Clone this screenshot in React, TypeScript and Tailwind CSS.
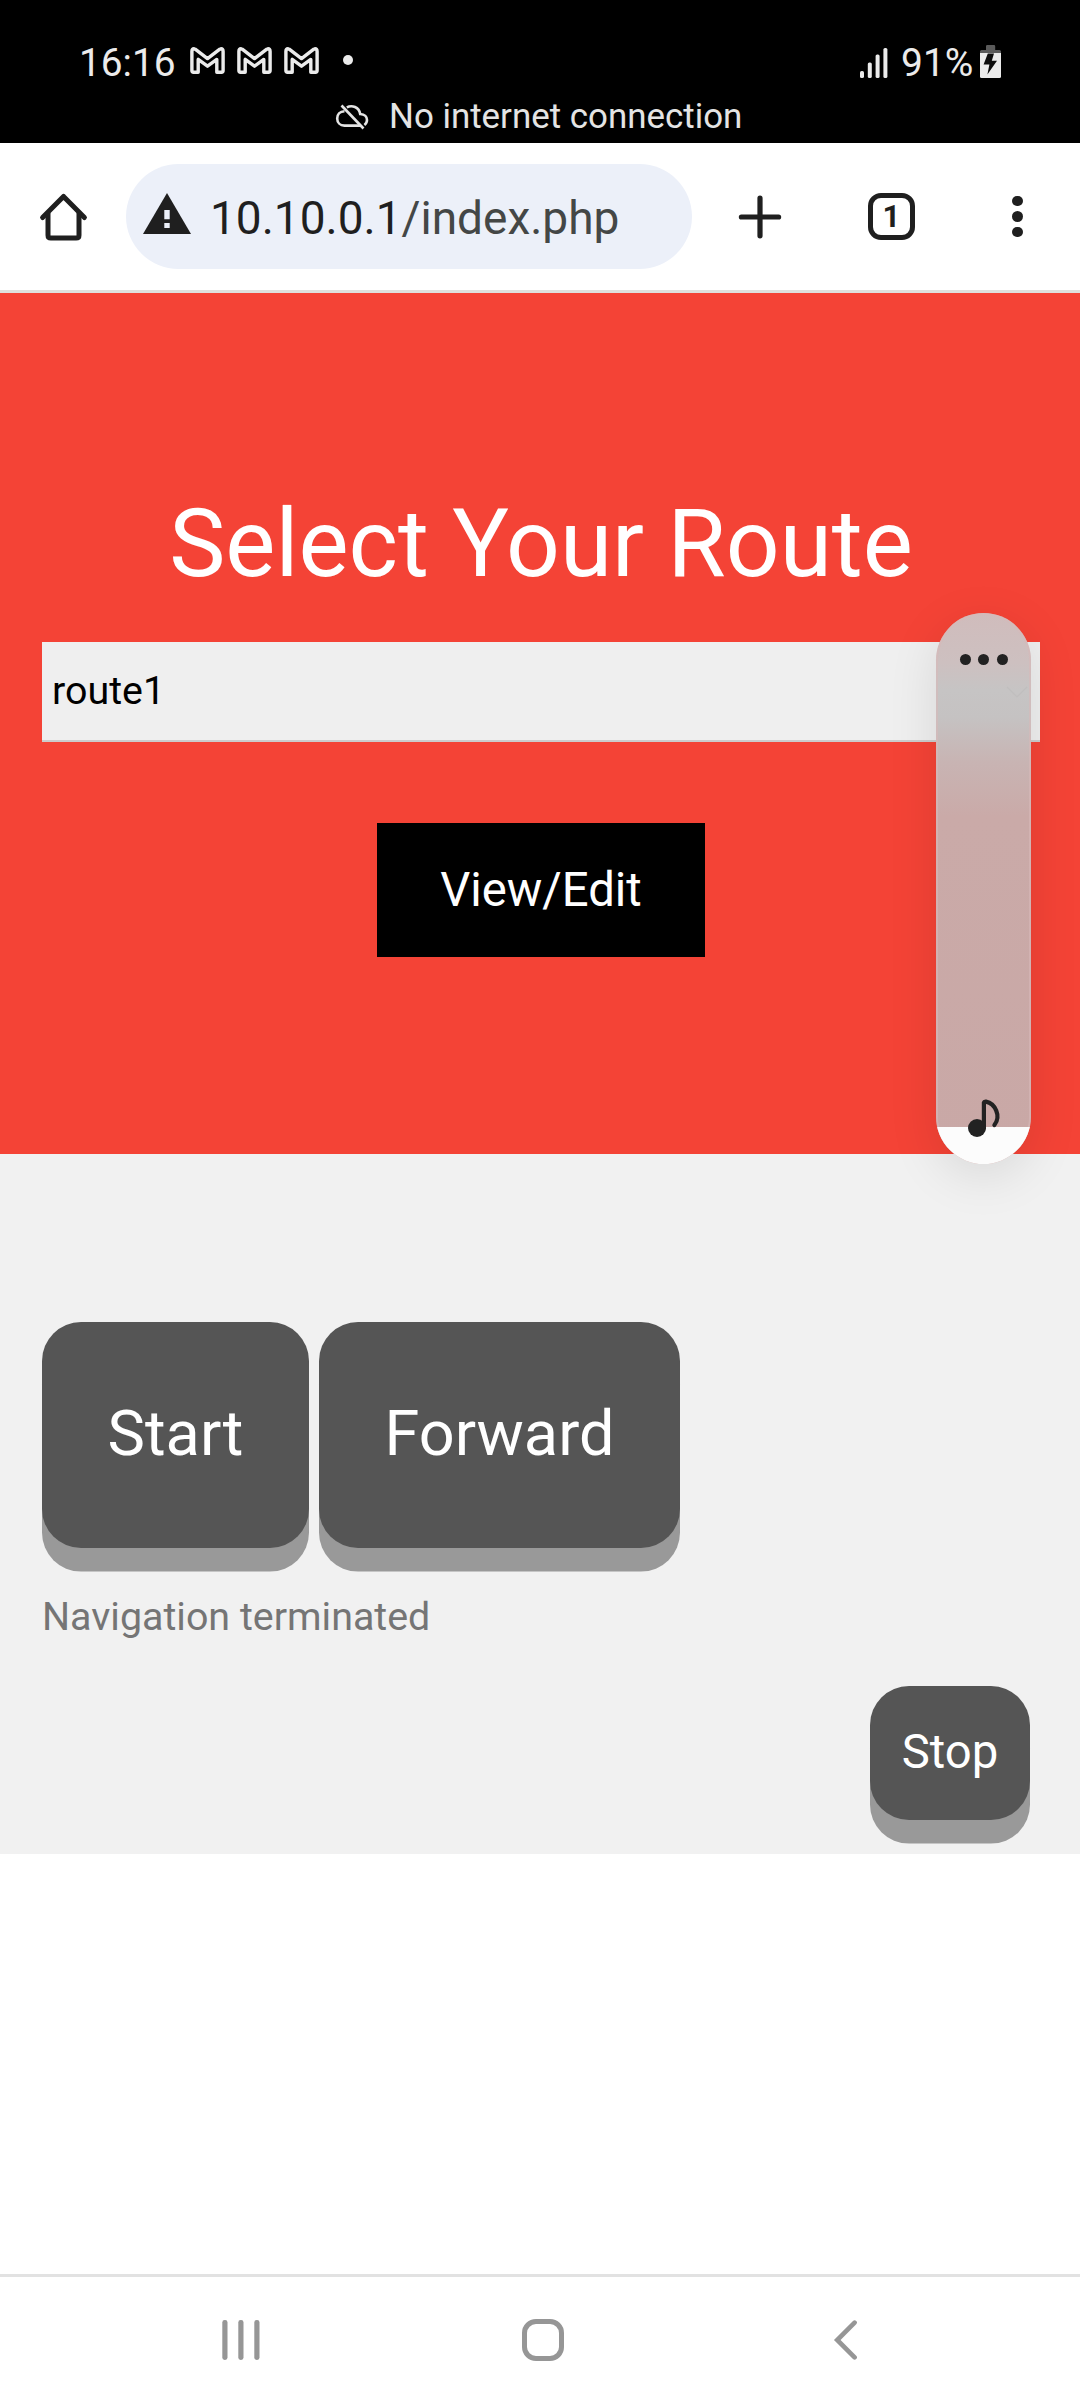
const MailIcon = () => (
  <svg className="h-[27px] w-[35px]" viewBox="0 0 35 27" fill="none" stroke="#ebebeb" strokeWidth="3.4" strokeLinejoin="round">
    <path d="M1.9 4.5Q1.9 1.7 4 1.7L5.2 2.2L17.5 11.6L29.8 2.2L31 1.7Q33.1 1.7 33.1 4.5V23.5Q33.1 25.2 31.4 25.2H26.8V12.4L17.5 19.2L8.2 12.4V25.2H3.6Q1.9 25.2 1.9 23.5Z" />
  </svg>
);

const CloudOffIcon = () => (
  <svg className="h-[26px] w-[34px]" viewBox="0 0 34 26" fill="none" stroke="#e4e4e4" strokeWidth="2.6">
    <path d="M6.5 1.5L28.5 24.5" />
    <path d="M9.5 7.2C4.8 7.4 2.2 10.6 2.2 14.4C2.2 18.8 5.4 21.6 9.4 21.6H25.6" />
    <path d="M11.8 3.4C17 0.6 24 3 25.2 10C29.8 10.2 32 13 32 16C32 18 31 19.8 29.4 21" />
  </svg>
);

const SignalIcon = () => (
  <svg className="h-[30px] w-[28px]" viewBox="0 0 28 30" fill="#ebebeb">
    <rect x="0" y="23" width="4" height="7" rx="1.6" />
    <rect x="7.8" y="14.5" width="4" height="15.5" rx="1.6" />
    <rect x="15.6" y="6.5" width="4" height="23.5" rx="1.6" />
    <rect x="23.4" y="0" width="4" height="30" rx="1.6" />
  </svg>
);

const BatteryIcon = () => (
  <svg className="h-[33px] w-[21px]" viewBox="0 0 21 33">
    <path d="M6 1.2Q6 0 7.2 0H14Q15.2 0 15.2 1.2V5H19.5Q21 5 21 6.5V8H0V6.5Q0 5 1.5 5H6Z" fill="#5a5a5a" />
    <path d="M0 8H21V31.5Q21 33 19.5 33H1.5Q0 33 0 31.5Z" fill="#ebebeb" />
    <path d="M7.8 8.4H14L11.8 15.8H17L7.4 29.6L9.4 19.6H3.6Z" fill="#0c0c0c" />
  </svg>
);

function StatusBar() {
  return (
    <header className="h-[143px] bg-black pt-[36px] text-[#ebebeb]">
      <div className="flex h-[54px] items-center pl-[79px] pr-[79px]">
        <span className="w-[111px] text-[38.8px] leading-[54px]">16:16</span>
        <div className="flex gap-[12px] pb-[6px]">
          <MailIcon />
          <MailIcon />
          <MailIcon />
        </div>
        <div className="mb-[6px] ml-[24px] size-[10px] rounded-full bg-[#ebebeb]" />
        <div className="ml-auto flex items-center">
          <SignalIcon />
          <span className="ml-[13px] w-[79px] whitespace-nowrap text-[39px] leading-[54px]">91%</span>
          <div className="pb-[4px]">
            <BatteryIcon />
          </div>
        </div>
      </div>
      <div className="flex h-[54px] items-center pl-[335px] text-[#e4e4e4]">
        <CloudOffIcon />
        <span className="ml-[20px] whitespace-nowrap text-[34.9px] leading-[54px]">No internet connection</span>
      </div>
    </header>
  );
}

function Toolbar() {
  return (
    <div className="flex h-[150px] items-center border-b-[3px] border-[#dfe0dd] bg-white pl-[39px]">
      <svg className="h-[50px] w-[49px]" viewBox="0 0 49 50" fill="none" stroke="#1f1f1f" strokeWidth="5" strokeLinecap="round" strokeLinejoin="round">
        <path d="M3.6 25.5L24.5 4.4L45.4 25.5" />
        <path d="M9 21V43.2Q9 46 11.8 46H37.2Q40 46 40 43.2V21" strokeLinecap="butt" />
      </svg>
      <div className="ml-[38px] flex h-[105px] w-[566px] items-center rounded-full bg-[#ecf0f9] pl-[17px]">
        <svg className="mb-[6px] h-[41px] w-[48px]" viewBox="0 0 48 41">
          <path d="M24 0L48 41H0Z" fill="#1f1f1f" />
          <path d="M21.3 17H26.7V26.2H21.3ZM21.3 30H26.7V35H21.3Z" fill="#ecf0f9" />
        </svg>
        <span className="ml-[19px] whitespace-nowrap pt-[3px] text-[46px] leading-[60px] text-[#444746]">
          <span className="text-[#1f1f1f]">10.10.0.1</span>/index.php
        </span>
      </div>
      <svg className="ml-[46px] h-[44px] w-[44px]" viewBox="0 0 44 44" stroke="#1f1f1f" strokeWidth="5.2" strokeLinecap="round">
        <path d="M22 3.2V40.8M3.4 22H40.6" />
      </svg>
      <div className="ml-[86px] flex size-[47px] items-center justify-center rounded-[13px] border-[5px] border-[#1f1f1f] text-[31px] font-bold leading-[36px] text-[#1f1f1f]">
        1
      </div>
      <div className="ml-[97px] flex flex-col gap-[5px]">
        <i className="size-[10.6px] rounded-full bg-[#1f1f1f]" />
        <i className="size-[10.6px] rounded-full bg-[#1f1f1f]" />
        <i className="size-[10.6px] rounded-full bg-[#1f1f1f]" />
      </div>
    </div>
  );
}

function RoutePanel() {
  return (
    <section className="flex h-[861px] flex-col items-center bg-[#f44336] pl-[42px] pr-[40px] pt-[180px]">
      <h1 className="h-[169px] whitespace-nowrap text-[94.5px] leading-[142px] text-white">Select Your Route</h1>
      <div className="h-[100px] w-full border-b-2 border-[#cccccc] bg-[#efefef] pl-[10px] text-[39.4px] leading-[97px] text-black">
        route1
      </div>
      <button className="mt-[81px] h-[134px] w-[328px] bg-black text-[47.25px] leading-[134px] text-white">View/Edit</button>
    </section>
  );
}

function ControlPanel() {
  return (
    <section className="flex h-[700px] flex-col bg-[#f1f1f1] pl-[42px] pt-[168px]">
      <div className="flex gap-[10px] text-[63px] text-white">
        <button className="h-[226px] w-[267px] rounded-[39px] bg-[#555555] pb-[1px] shadow-[0_23.6px_0_#999999]">Start</button>
        <button className="h-[226px] w-[361px] rounded-[39px] bg-[#555555] pb-[1px] shadow-[0_23.6px_0_#999999]">Forward</button>
      </div>
      <p className="mt-[39px] h-[99px] text-[39.4px] leading-[59px] text-[#757575]">Navigation terminated</p>
      <button className="ml-[828px] h-[134px] w-[160px] rounded-[39px] bg-[#555555] pb-[2px] text-[47.25px] text-white shadow-[0_23.6px_0_#999999]">
        Stop
      </button>
    </section>
  );
}

function VolumeSlider() {
  return (
    <div className="absolute left-[936px] top-[613px] flex h-[551px] w-[95px] flex-col overflow-visible rounded-full shadow-[0_12px_50px_rgba(0,0,0,0.1)]">
      <div className="relative flex size-full flex-col items-center overflow-hidden rounded-full bg-[linear-gradient(to_bottom,#d0bcbc_0%,#cdc0c0_9%,#c6c4c4_14%,#c5c2c2_19%,#c8b4b3_27%,#caaaa8_37%,#c9a8a6_100%)] shadow-[inset_0_0_0_2px_rgba(215,185,185,0.6)]">
        <div className="mt-[41px] flex gap-[7.5px]">
          <i className="size-[11px] rounded-full bg-[#222222]" />
          <i className="size-[11px] rounded-full bg-[#222222]" />
          <i className="size-[11px] rounded-full bg-[#222222]" />
        </div>
        <svg className="ml-[66px] mt-[21px] h-[12px] w-[22px]" viewBox="0 0 22 12" fill="none" stroke="#c0bebe" strokeWidth="1.2">
          <path d="M1 1L11 11L21 1" />
        </svg>
        <div className="mt-auto h-[37px] w-full bg-[#fcfcfc]" />
        <svg className="absolute left-[31px] top-[485px] h-[42px] w-[36px]" viewBox="0 0 36 42" fill="none" stroke="#222222" strokeWidth="4.2" strokeLinecap="round" strokeLinejoin="round">
          <circle cx="10" cy="30" r="9" fill="#222222" stroke="none" />
          <path d="M16.9 30V4.6Q17.2 3.4 19 3.6C28 5.4 34.5 18 27.4 27" />
        </svg>
      </div>
    </div>
  );
}

function NavBar() {
  return (
    <nav className="flex h-[126px] items-center border-t-[3px] border-[#e2e2e2] bg-white pl-[222px]">
      <svg className="mt-[3px] h-[40px] w-[38px]" viewBox="0 0 38 40" fill="#969696">
        <rect x="0.3" width="5.2" height="40" rx="2.4" />
        <rect x="16.3" width="5.2" height="40" rx="2.4" />
        <rect x="32.3" width="5.2" height="40" rx="2.4" />
      </svg>
      <div className="ml-[262px] mt-[3px] size-[42px] rounded-[14px] border-[5px] border-[#969696]" />
      <svg className="ml-[269px] mt-[3px] h-[40px] w-[25px]" viewBox="0 0 25 40" fill="none" stroke="#969696" strokeWidth="4.6" strokeLinecap="round" strokeLinejoin="miter">
        <path d="M21.6 2.6L4.2 20L21.6 37.4" />
      </svg>
    </nav>
  );
}

export default function App() {
  return (
    <div className="relative h-[2400px] w-[1080px] overflow-hidden bg-white font-[Roboto,sans-serif]">
      <StatusBar />
      <Toolbar />
      <RoutePanel />
      <ControlPanel />
      <div className="h-[420px] bg-white" />
      <NavBar />
      <VolumeSlider />
    </div>
  );
}
